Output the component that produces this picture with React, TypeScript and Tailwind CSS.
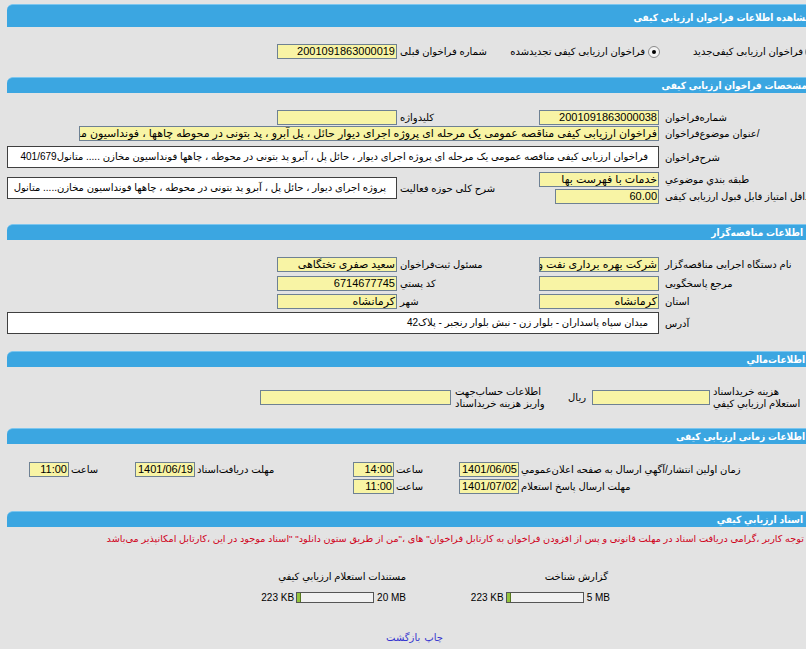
import React from "react";

const field =
  "h-[15px] shrink-0 overflow-hidden whitespace-nowrap border border-[#6e8193] bg-[#f8f4a5] px-[1px] text-[11px] leading-[13px]";
const box =
  "shrink-0 overflow-hidden whitespace-nowrap border border-[#3f3f3f] bg-white pr-[10px] text-[10px]";
const labelA = "flex w-[152px] shrink-0 justify-end whitespace-nowrap pl-[3px]";
const labelB = "flex w-[141px] shrink-0 justify-end whitespace-nowrap pl-[2px]";

function Bar({ title, className = "" }: { title: string; className?: string }) {
  return (
    <div
      className={`flex items-center rounded-tl-[6px] border-t border-[#7cc6ef] bg-[#3ba6e1] text-[10px] font-bold text-white font-stretch-condensed ${className}`}
    >
      <span className="whitespace-nowrap">{title}</span>
    </div>
  );
}

function Radio({ checked, className = "" }: { checked?: boolean; className?: string }) {
  return (
    <span
      className={`flex h-[12px] w-[12px] shrink-0 items-center justify-center rounded-full border border-[#8a8a8a] bg-[#f3f3f3] ${className}`}
    >
      {checked && <span className="h-[4px] w-[4px] rounded-full bg-black" />}
    </span>
  );
}

function Progress({ max }: { max: string }) {
  return (
    <div dir="ltr" className="flex h-[11px] items-center justify-end text-[10px] leading-[11px]">
      <span>223 KB</span>
      <div className="ml-[2px] flex h-[11px] w-[78px] border border-[#555] bg-[#f1f1f1]">
        <div className="h-full w-[4px] border-r border-[#55761f] bg-[#93c33d]" />
      </div>
      <span className="ml-[3px]">{max}</span>
    </div>
  );
}

export default function App() {
  return (
    <div className="h-[649px] w-[806px] overflow-hidden bg-[#e3e3e3] font-['Liberation_Sans','DejaVu_Sans',sans-serif] text-[10px] text-black">
      <div dir="rtl" className="w-[814px] pl-[7px] pt-[4px]">
        {/* header */}
        <Bar title="مشاهده اطلاعات فراخوان ارزيابی کيفی" className="h-[23px] pr-[3px] pt-[2px]" />

        <div className="mt-[17px] flex h-[15px] items-center">
          <div className="flex w-[152px] shrink-0 items-center">
            <Radio className="-mr-[3px]" />
            <span className="mr-[2px] whitespace-nowrap">فراخوان ارزیابی کیفی‌جدید</span>
          </div>
          <div className="flex w-[264px] shrink-0 items-center">
            <Radio checked className="mr-[2px]" />
            <span className="mr-[3px] whitespace-nowrap">فراخوان ارزیابی کیفی تجدیدشده</span>
            <span className="mr-auto whitespace-nowrap pl-[2px]">شماره فراخوان قبلی</span>
          </div>
          <div className={`${field} mr-[1px] w-[120px]`}>2001091863000019</div>
        </div>

        {/* مشخصات */}
        <Bar title="مشخصات فراخوان ارزيابی کيفی" className="mt-[18px] h-[16px] pr-[7px]" />

        <div className="mt-[16px] flex h-[16px] items-center">
          <div className={labelA}>شماره‌فراخوان</div>
          <div className={`${field} mr-[3px] w-[120px]`}>2001091863000038</div>
          <div className={labelB}>کلیدواژه</div>
          <div className={`${field} mr-[1px] w-[120px]`}></div>
        </div>
        <div className="mt-[1px] flex h-[15px] items-center">
          <div className={labelA}>/عنوان  موضوع‌فراخوان</div>
          <div className={`${field} mr-[3px] w-[580px]`}>
            فراخوان ارزیابی کیفی مناقصه عمومی یک مرحله ای پروژه اجرای دیوار حائل ، پل آبرو ، پد بتونی در محوطه چاهها ، فونداسیون مخازن متانول
          </div>
        </div>
        <div className="mt-[5px] flex h-[22px] items-center">
          <div className={labelA}>شرح‌فراخوان</div>
          <div className={`${box} mr-[3px] h-[22px] w-[652px] leading-[20px]`}>
            فراخوان ارزیابی کیفی مناقصه عمومی یک مرحله ای پروژه اجرای دیوار ، حائل پل ، آبرو پد بتونی در محوطه ، چاهها فونداسیون مخازن ..... متانول401/679
          </div>
        </div>
        <div className="mt-[4px] flex">
          <div className="flex w-[275px] shrink-0 flex-col">
            <div className="flex h-[15px] items-center">
              <div className={labelA}>طبقه بندي موضوعي</div>
              <div className={`${field} mr-[3px] w-[120px]`}>خدمات با فهرست بها</div>
            </div>
            <div className="mt-[2px] flex h-[15px] items-center">
              <div className={labelA}>حداقل امتیاز قابل قبول ارزیابی کیفی</div>
              <div className={`${field} mr-[3px] w-[104px]`}>60.00</div>
            </div>
          </div>
          <div className="flex items-center">
            <div className={labelB}>شرح کلی حوزه فعالیت</div>
            <div className={`${box} mr-[1px] h-[22px] w-[390px] leading-[20px]`}>
              پروژه اجرای دیوار ، حائل پل ، آبرو پد بتونی در محوطه ، چاهها فونداسیون مخازن..... متانول
            </div>
          </div>
        </div>

        {/* مناقصه گزار */}
        <Bar title="اطلاعات مناقصه‌گزار" className="mt-[20px] h-[16px] pr-[11px]" />

        <div className="mt-[17px] flex h-[15px] items-center">
          <div className={labelA}>نام دستگاه اجرایی مناقصه‌گزار</div>
          <div className={`${field} mr-[3px] w-[120px]`}>شرکت بهره برداری نفت و گاز غرب</div>
          <div className={labelB}>مسئول ثبت‌فراخوان</div>
          <div className={`${field} mr-[1px] w-[120px]`}>سعید صفری تختگاهی</div>
        </div>
        <div className="mt-[4px] flex h-[15px] items-center">
          <div className={labelA}>مرجع پاسخگویی</div>
          <div className={`${field} mr-[3px] w-[120px]`}></div>
          <div className={labelB}>کد پستي</div>
          <div className={`${field} mr-[1px] w-[120px]`}>6714677745</div>
        </div>
        <div className="mt-[3px] flex h-[15px] items-center">
          <div className={labelA}>استان</div>
          <div className={`${field} mr-[3px] w-[120px]`}>کرمانشاه</div>
          <div className={labelB}>شهر</div>
          <div className={`${field} mr-[1px] w-[120px]`}>کرمانشاه</div>
        </div>
        <div className="mt-[3px] flex h-[22px] items-center">
          <div className={labelA}>آدرس</div>
          <div className={`${box} mr-[3px] h-[22px] w-[652px] leading-[20px]`}>
            میدان سپاه پاسداران - بلوار زن - نبش بلوار رنجبر - پلاک42
          </div>
        </div>

        {/* مالی */}
        <Bar title="اطلاعات‌مالي" className="mt-[17px] h-[16px] pr-[9px]" />

        <div className="mt-[17px] flex h-[27px] items-center">
          <div className="flex w-[102px] shrink-0 justify-end pl-[1px]">
            <div className="whitespace-nowrap text-left leading-[12px]">
              هزینه خرید‌اسناد
              <br />
              استعلام ارزیابي کیفي
            </div>
          </div>
          <div className={`${field} mr-[2px] w-[118px]`}></div>
          <div className="flex w-[139px] shrink-0 items-center">
            <span className="mr-[6px]">ریال</span>
            <div className="mr-auto whitespace-nowrap pl-[2px] text-left leading-[12px]">
              اطلاعات حساب‌جهت
              <br />
              واریز هزینه خرید‌اسناد
            </div>
          </div>
          <div className={`${field} mr-[2px] w-[191px]`}></div>
        </div>

        {/* زمانی */}
        <Bar title="اطلاعات زمانی ارزيابی کيفی" className="mt-[17px] h-[16px] pr-[9px]" />

        <div className="mt-[18px] flex h-[15px] items-center">
          <div className="flex w-[294px] shrink-0 justify-end whitespace-nowrap pl-[1px]">
            زمان اولین انتشار/آگهي ارسال به صفحه اعلان‌عمومي
          </div>
          <div className={`${field} mr-[1px] w-[60px]`}>1401/06/05</div>
          <div className="flex w-[64px] shrink-0 justify-end pl-[1px]">ساعت</div>
          <div className={`${field} mr-[1px] w-[41px]`}>14:00</div>
          <div className="flex w-[157px] shrink-0 justify-end whitespace-nowrap pl-[1px]">مهلت دریافت‌اسناد</div>
          <div className={`${field} mr-[1px] w-[60px]`}>1401/06/19</div>
          <div className="flex w-[65px] shrink-0 justify-end pl-[1px]">ساعت</div>
          <div className={`${field} mr-[1px] w-[40px]`}>11:00</div>
        </div>
        <div className="mt-[2px] flex h-[15px] items-center">
          <div className="flex w-[294px] shrink-0 justify-end whitespace-nowrap pl-[1px]">
            مهلت ارسال پاسخ استعلام
          </div>
          <div className={`${field} mr-[1px] w-[60px]`}>1401/07/02</div>
          <div className="flex w-[64px] shrink-0 justify-end pl-[1px]">ساعت</div>
          <div className={`${field} mr-[1px] w-[41px]`}>11:00</div>
        </div>

        {/* اسناد */}
        <Bar title="اسناد ارزيابي کيفي" className="mt-[17px] h-[16px] pr-[11px]" />

        <div className="mt-[5px] h-[14px] whitespace-nowrap pr-[10px] text-[9.7px] leading-[14px] text-[#d0021b]">
          توجه کاربر ،گرامی دریافت اسناد در مهلت قانونی و پس از افزودن فراخوان به کارتابل فراخوان" های ،"من از طریق ستون دانلود" "اسناد موجود در این ،کارتابل امکانپذیر می‌باشد
        </div>

        <div className="mr-[204px] mt-[24px] flex">
          <div className="w-[204px] shrink-0">
            <div className="h-[14px] pr-[2px] leading-[14px]">گزارش شناخت</div>
            <div className="mt-[8px]">
              <Progress max="5 MB" />
            </div>
          </div>
          <div className="w-[204px] shrink-0">
            <div className="h-[14px] leading-[14px]">مستندات استعلام ارزیابي کیفي</div>
            <div className="mt-[8px]">
              <Progress max="20 MB" />
            </div>
          </div>
        </div>

        <div className="mt-[27px] flex justify-center gap-[4px] pl-[8px] text-[#3434cf]">
          <a href="#">چاپ</a>
          <a href="#">بازگشت</a>
        </div>
      </div>
    </div>
  );
}
